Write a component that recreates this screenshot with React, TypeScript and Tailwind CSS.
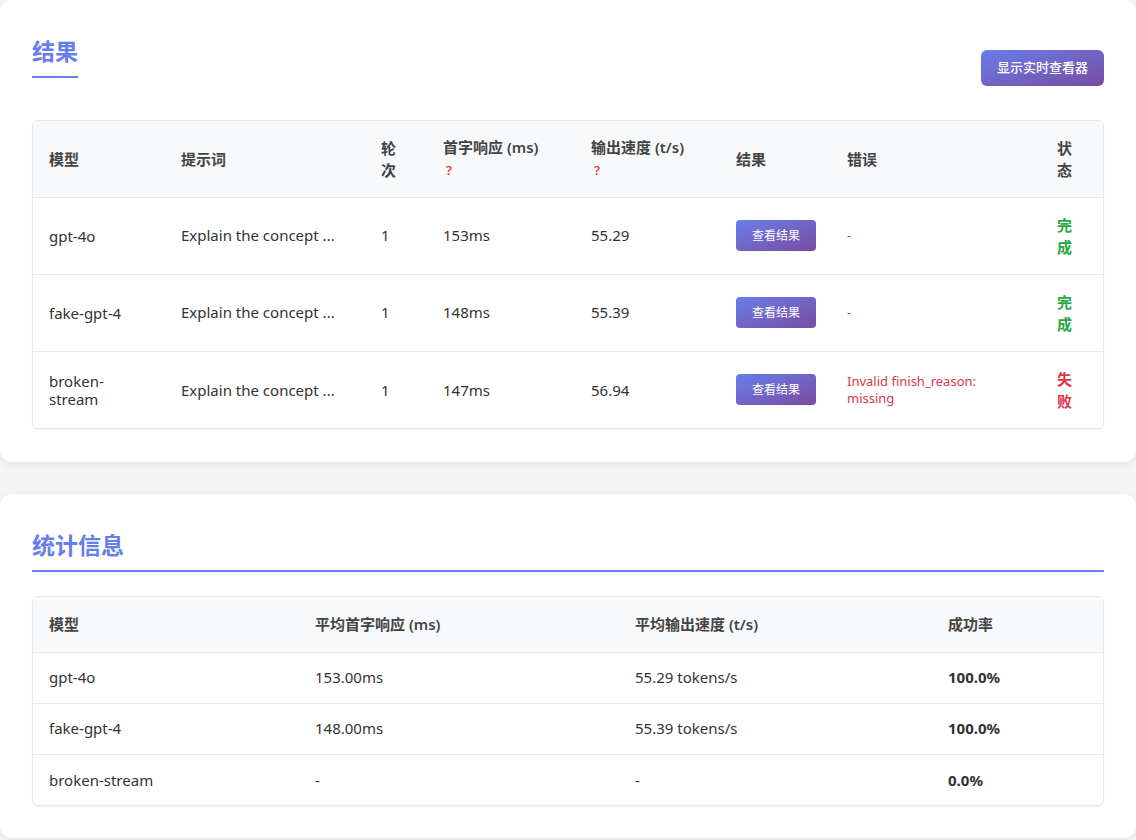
import React from "react";

const font = { fontFamily: '"Noto Sans","Noto Sans CJK SC",sans-serif' };
const grad = "bg-gradient-to-br from-[#667eea] to-[#764ba2]";

const rows = [
  { m: "gpt-4o", t: "153ms", s: "55.29", err: "-", ok: true },
  { m: "fake-gpt-4", t: "148ms", s: "55.39", err: "-", ok: true },
  { m: "broken-stream", t: "147ms", s: "56.94", err: "Invalid finish_reason: missing", ok: false },
];

const stats = [
  ["gpt-4o", "153.00ms", "55.29 tokens/s", "100.0%"],
  ["fake-gpt-4", "148.00ms", "55.39 tokens/s", "100.0%"],
  ["broken-stream", "-", "-", "0.0%"],
];

export default function App() {
  return (
    <div style={font} className="bg-[#f5f5f5] min-h-[840px] text-[15px] text-[#333]">
      <div className="bg-white rounded-b-xl rounded-t-xl shadow-[0_2px_10px_rgba(0,0,0,0.08)] px-8 pt-[34px] pb-8 h-[462px]">
        <div className="flex justify-between items-start">
          <h2 className="text-[23px] font-bold text-[#667eea] leading-[34px] pb-2 border-b-2 border-[#667eea]">结果</h2>
          <button className={`${grad} text-white text-[13px] font-medium rounded-md px-4 h-[36px] mt-4 mr-0`}>显示实时查看器</button>
        </div>
        <div className="mt-[34px] border border-[#e5e7eb] rounded-md overflow-hidden shadow-[0_1px_2px_rgba(0,0,0,0.06)]">
          <table className="w-full table-fixed border-collapse">
            <colgroup>
              <col className="w-[132px]" /><col className="w-[200px]" /><col className="w-[62px]" /><col className="w-[148px]" /><col className="w-[145px]" /><col className="w-[111px]" /><col className="w-[210px]" /><col />
            </colgroup>
            <thead>
              <tr className="bg-[#f8f9fa] h-[76px] text-left text-[15px] font-semibold text-[#444]">
                <th className="px-4 font-semibold">模型</th>
                <th className="px-4 font-semibold">提示词</th>
                <th className="px-4 font-semibold leading-[22px]">轮<br />次</th>
                <th className="px-4 font-semibold leading-[22px]">首字响应 (ms)<br /><span className="text-[#e53e3e] text-[13px] pl-[3px]">?</span></th>
                <th className="px-4 font-semibold leading-[22px]">输出速度 (t/s)<br /><span className="text-[#e53e3e] text-[13px] pl-[3px]">?</span></th>
                <th className="px-4 font-semibold">结果</th>
                <th className="px-4 font-semibold">错误</th>
                <th className="px-4 font-semibold leading-[22px]">状<br />态</th>
              </tr>
            </thead>
            <tbody>
              {rows.map((r) => (
                <tr key={r.m} className="h-[77px] border-t border-[#e5e7eb]">
                  <td className="px-4 leading-[18px]">{r.m === "broken-stream" ? <>broken-<br />stream</> : r.m}</td>
                  <td className="px-4 whitespace-nowrap overflow-hidden">Explain the concept ...</td>
                  <td className="px-4">1</td>
                  <td className="px-4">{r.t}</td>
                  <td className="px-4">{r.s}</td>
                  <td className="px-4"><button className={`${grad} text-white text-[12px] rounded-[4px] w-[80px] h-[31px]`}>查看结果</button></td>
                  <td className="px-4 text-[13px] text-[#dc3545] leading-[17px]">{r.err}</td>
                  <td className={`px-4 font-bold leading-[22px] ${r.ok ? "text-[#28a745]" : "text-[#dc3545]"}`}>{r.ok ? <>完<br />成</> : <>失<br />败</>}</td>
                </tr>
              ))}
            </tbody>
          </table>
        </div>
      </div>
      <div className="mt-8 bg-white rounded-xl shadow-[0_2px_10px_rgba(0,0,0,0.08)] px-8 pt-[34px] pb-8">
        <h2 className="text-[23px] font-bold text-[#667eea] leading-[34px] pb-2 border-b-2 border-[#667eea]">统计信息</h2>
        <div className="mt-[24px] border border-[#e5e7eb] rounded-md overflow-hidden shadow-[0_1px_2px_rgba(0,0,0,0.06)]">
          <table className="w-full table-fixed border-collapse">
            <colgroup><col className="w-[266px]" /><col className="w-[320px]" /><col className="w-[313px]" /><col /></colgroup>
            <thead>
              <tr className="bg-[#f8f9fa] h-[55px] text-left text-[#444]">
                <th className="px-4 font-semibold">模型</th>
                <th className="px-4 font-semibold">平均首字响应 (ms)</th>
                <th className="px-4 font-semibold">平均输出速度 (t/s)</th>
                <th className="px-4 font-semibold">成功率</th>
              </tr>
            </thead>
            <tbody>
              {stats.map((s) => (
                <tr key={s[0]} className="h-[51px] border-t border-[#e5e7eb]">
                  <td className="px-4">{s[0]}</td>
                  <td className="px-4">{s[1]}</td>
                  <td className="px-4">{s[2]}</td>
                  <td className="px-4 font-bold">{s[3]}</td>
                </tr>
              ))}
            </tbody>
          </table>
        </div>
      </div>
    </div>
  );
}
